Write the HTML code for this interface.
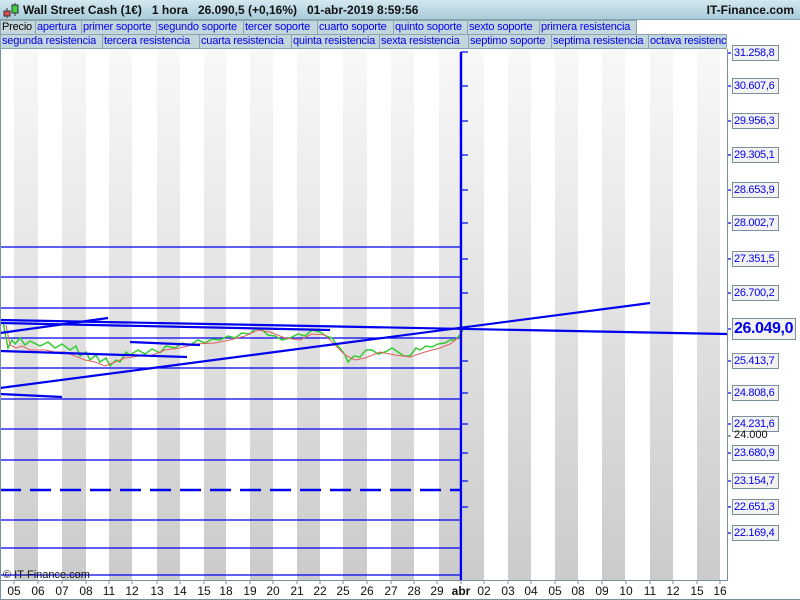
<!DOCTYPE html>
<html><head><meta charset="utf-8"><style>
*{margin:0;padding:0;box-sizing:border-box}
body{width:800px;height:600px;overflow:hidden;background:#fff;font-family:"Liberation Sans",sans-serif;position:relative}
#hdr{position:absolute;left:0;top:0;width:800px;height:20px;background:linear-gradient(#d4e8f0,#a8ccda);border-bottom:1px solid #8aa2ae;font-size:12px;font-weight:bold;color:#111;white-space:nowrap}
.t{position:absolute;height:15px;background:#c3d5dd;border:1px solid #8ca4b0;font-size:11px;letter-spacing:-0.2px;color:#0000ee;line-height:13px;padding-left:1px;white-space:nowrap;overflow:hidden}
.al{position:absolute;left:732px;width:47px;height:16px;border:1px solid #7a909c;background:#f2f2f2;color:#0000ee;font-size:11px;letter-spacing:-0.3px;line-height:14px;padding-left:1px;white-space:nowrap;overflow:hidden}
.d{position:absolute;top:584px;font-size:12px;color:#111;width:24px;text-align:center}
</style></head><body>
<div id="hdr">
<svg style="position:absolute;left:3px;top:2px" width="16" height="16"><line x1="4" y1="6" x2="4" y2="16" stroke="#333"/><rect x="1" y="9" width="6" height="5" fill="#e05050" stroke="#333"/><line x1="12" y1="1" x2="12" y2="14" stroke="#333"/><rect x="9" y="3" width="6" height="8" fill="#40d040" stroke="#333"/></svg>
<span style="position:absolute;left:23px;top:3px">Wall Street Cash (1€)&nbsp;&nbsp;&nbsp;1 hora&nbsp;&nbsp;&nbsp;26.090,5 (+0,16%)&nbsp;&nbsp;&nbsp;01-abr-2019 8:59:56</span>
<span style="position:absolute;right:6px;top:3px">IT-Finance.com</span>
</div>
<div class="t" style="left:0;top:20px;width:36px;color:#000">Precio</div>
<div class="t" style="left:35px;top:20px;width:47px">apertura</div>
<div class="t" style="left:81px;top:20px;width:76px">primer soporte</div>
<div class="t" style="left:156px;top:20px;width:88px">segundo soporte</div>
<div class="t" style="left:243px;top:20px;width:75px">tercer soporte</div>
<div class="t" style="left:317px;top:20px;width:77px">cuarto soporte</div>
<div class="t" style="left:393px;top:20px;width:75px">quinto soporte</div>
<div class="t" style="left:467px;top:20px;width:73px">sexto soporte</div>
<div class="t" style="left:539px;top:20px;width:98px">primera resistencia</div>
<div class="t" style="left:0;top:34px;width:103px">segunda resistencia</div>
<div class="t" style="left:102px;top:34px;width:98px">tercera resistencia</div>
<div class="t" style="left:199px;top:34px;width:93px">cuarta resistencia</div>
<div class="t" style="left:291px;top:34px;width:89px">quinta resistencia</div>
<div class="t" style="left:379px;top:34px;width:90px">sexta resistencia</div>
<div class="t" style="left:468px;top:34px;width:84px">septimo soporte</div>
<div class="t" style="left:551px;top:34px;width:98px">septima resistencia</div>
<div class="t" style="left:648px;top:34px;width:79px">octava resistencia</div>
<svg style="position:absolute;left:0;top:0" width="800" height="600">
<defs><linearGradient id="g" x1="0" y1="0" x2="0" y2="1"><stop offset="0" stop-color="#f8f8f8"/><stop offset="1" stop-color="#cbcbcb"/></linearGradient></defs>
<g fill="url(#g)">
<rect x="14" y="49" width="24" height="531"/><rect x="62" y="49" width="24" height="531"/><rect x="109" y="49" width="23" height="531"/><rect x="157" y="49" width="23" height="531"/><rect x="204" y="49" width="22" height="531"/><rect x="250" y="49" width="23" height="531"/><rect x="297" y="49" width="23" height="531"/><rect x="343" y="49" width="24" height="531"/><rect x="391" y="49" width="23" height="531"/><rect x="439" y="49" width="22" height="531"/><rect x="463" y="49" width="21" height="531"/><rect x="508" y="49" width="23" height="531"/><rect x="555" y="49" width="23" height="531"/><rect x="602" y="49" width="23" height="531"/><rect x="650" y="49" width="23" height="531"/><rect x="697" y="49" width="23" height="531"/>
</g>
<g stroke="#0000ee" stroke-width="1.3">
<line x1="0" y1="247" x2="460" y2="247"/><line x1="0" y1="277" x2="460" y2="277"/><line x1="0" y1="308" x2="460" y2="308"/><line x1="0" y1="338" x2="460" y2="338"/><line x1="0" y1="368" x2="460" y2="368"/><line x1="0" y1="399" x2="460" y2="399"/><line x1="0" y1="429" x2="460" y2="429"/><line x1="0" y1="460" x2="460" y2="460"/><line x1="0" y1="520" x2="460" y2="520"/><line x1="0" y1="548" x2="460" y2="548"/><line x1="0" y1="575" x2="460" y2="575"/>
</g>
<line x1="0" y1="490" x2="460" y2="490" stroke="#0000ee" stroke-width="2.5" stroke-dasharray="21,9"/>
<polyline fill="none" stroke="#3c3" stroke-width="1.5" points="3,322 8,348 12,340 15,344 20,338 25,345 30,341 40,346 48,342 55,348 62,344 70,350 76,346 80,356 86,352 90,360 96,355 100,362 106,358 110,366 116,360 120,362 126,352 130,355 138,350 145,354 152,349 160,353 166,346 175,348 182,343 190,345 198,340 205,343 212,339 220,340 228,336 235,338 242,333 250,334 256,328 262,330 268,335 275,336 282,340 290,338 298,334 305,336 312,330 320,332 326,336 332,338 336,344 340,348 345,355 348,362 354,356 360,357 366,350 372,350 378,354 385,352 392,348 398,352 404,356 410,356 416,348 420,350 426,346 432,347 438,344 445,343 450,340 455,340 460,335 464,328 468,326"/>
<polyline fill="none" stroke="#e06060" stroke-width="1" points="6,325 10,345 16,348 22,346 30,350 45,350 55,352 65,352 75,356 85,360 95,362 105,366 115,362 125,358 140,356 150,356 165,350 180,348 195,344 215,343 230,340 245,336 258,330 270,332 285,338 300,340 312,334 325,335 335,345 345,355 355,360 365,358 380,352 395,355 410,357 425,352 440,348 450,344 458,338"/>
<g stroke="#0000ee" stroke-width="2.2">
<line x1="0" y1="320" x2="727" y2="334"/><line x1="0" y1="323" x2="330" y2="330"/><line x1="0" y1="333" x2="108" y2="318"/><line x1="0" y1="351" x2="187" y2="357"/><line x1="130" y1="342" x2="200" y2="345"/><line x1="0" y1="388" x2="650" y2="303"/><line x1="0" y1="394" x2="62" y2="397"/>
</g>
<line x1="461" y1="52" x2="461" y2="580" stroke="#0000ee" stroke-width="2.5"/>
<g stroke="#0000ee" stroke-width="1.2">
<line x1="461" y1="52" x2="468" y2="52"/><line x1="461" y1="86" x2="468" y2="86"/><line x1="461" y1="121" x2="468" y2="121"/><line x1="461" y1="155" x2="468" y2="155"/><line x1="461" y1="190" x2="468" y2="190"/><line x1="461" y1="223" x2="468" y2="223"/><line x1="461" y1="259" x2="468" y2="259"/><line x1="461" y1="293" x2="468" y2="293"/><line x1="461" y1="361" x2="468" y2="361"/><line x1="461" y1="393" x2="468" y2="393"/><line x1="461" y1="424" x2="468" y2="424"/><line x1="461" y1="453" x2="468" y2="453"/><line x1="461" y1="481" x2="468" y2="481"/><line x1="461" y1="507" x2="468" y2="507"/>
<line x1="727" y1="53" x2="731" y2="53"/><line x1="727" y1="86" x2="731" y2="86"/><line x1="727" y1="121" x2="731" y2="121"/><line x1="727" y1="155" x2="731" y2="155"/><line x1="727" y1="190" x2="731" y2="190"/><line x1="727" y1="223" x2="731" y2="223"/><line x1="727" y1="259" x2="731" y2="259"/><line x1="727" y1="293" x2="731" y2="293"/><line x1="727" y1="329" x2="731" y2="329"/><line x1="727" y1="361" x2="731" y2="361"/><line x1="727" y1="393" x2="731" y2="393"/><line x1="727" y1="424" x2="731" y2="424"/><line x1="727" y1="453" x2="731" y2="453"/><line x1="727" y1="481" x2="731" y2="481"/><line x1="727" y1="507" x2="731" y2="507"/><line x1="727" y1="533" x2="731" y2="533"/>
</g>
<line x1="727" y1="436" x2="731" y2="436" stroke="#444"/>
<line x1="727.5" y1="49" x2="727.5" y2="581" stroke="#7a909c"/>
<line x1="0" y1="580.5" x2="728" y2="580.5" stroke="#7a909c"/>
<line x1="0.5" y1="49" x2="0.5" y2="600" stroke="#7a909c"/>
<line x1="0" y1="599.5" x2="800" y2="599.5" stroke="#7a909c"/>
<g stroke="#7a909c"><line x1="14" y1="580" x2="14" y2="584"/><line x1="38" y1="580" x2="38" y2="584"/><line x1="62" y1="580" x2="62" y2="584"/><line x1="86" y1="580" x2="86" y2="584"/><line x1="109" y1="580" x2="109" y2="584"/><line x1="132" y1="580" x2="132" y2="584"/><line x1="157" y1="580" x2="157" y2="584"/><line x1="180" y1="580" x2="180" y2="584"/><line x1="204" y1="580" x2="204" y2="584"/><line x1="226" y1="580" x2="226" y2="584"/><line x1="250" y1="580" x2="250" y2="584"/><line x1="273" y1="580" x2="273" y2="584"/><line x1="297" y1="580" x2="297" y2="584"/><line x1="320" y1="580" x2="320" y2="584"/><line x1="343" y1="580" x2="343" y2="584"/><line x1="367" y1="580" x2="367" y2="584"/><line x1="391" y1="580" x2="391" y2="584"/><line x1="414" y1="580" x2="414" y2="584"/><line x1="437" y1="580" x2="437" y2="584"/><line x1="461" y1="580" x2="461" y2="584"/><line x1="484" y1="580" x2="484" y2="584"/><line x1="508" y1="580" x2="508" y2="584"/><line x1="531" y1="580" x2="531" y2="584"/><line x1="555" y1="580" x2="555" y2="584"/><line x1="578" y1="580" x2="578" y2="584"/><line x1="602" y1="580" x2="602" y2="584"/><line x1="626" y1="580" x2="626" y2="584"/><line x1="650" y1="580" x2="650" y2="584"/><line x1="673" y1="580" x2="673" y2="584"/><line x1="697" y1="580" x2="697" y2="584"/><line x1="720" y1="580" x2="720" y2="584"/></g>
<text x="3" y="578" font-family="Liberation Sans" font-size="11" fill="#111">© IT-Finance.com</text>
</svg>
<div class="al" style="top:45px">31.258,8</div>
<div class="al" style="top:78px">30.607,6</div>
<div class="al" style="top:113px">29.956,3</div>
<div class="al" style="top:147px">29.305,1</div>
<div class="al" style="top:182px">28.653,9</div>
<div class="al" style="top:215px">28.002,7</div>
<div class="al" style="top:251px">27.351,5</div>
<div class="al" style="top:285px">26.700,2</div>
<div class="al" style="top:318px;width:64px;height:22px;font-size:16px;font-weight:bold;line-height:20px;letter-spacing:-0.4px">26.049,0</div>
<div class="al" style="top:353px">25.413,7</div>
<div class="al" style="top:385px">24.808,6</div>
<div class="al" style="top:416px">24.231,6</div>
<div style="position:absolute;left:734px;top:429px;font-size:11px;color:#111">24.000</div>
<div class="al" style="top:445px">23.680,9</div>
<div class="al" style="top:473px">23.154,7</div>
<div class="al" style="top:499px">22.651,3</div>
<div class="al" style="top:525px">22.169,4</div>
<div class="d" style="left:2px">05</div><div class="d" style="left:26px">06</div><div class="d" style="left:50px">07</div><div class="d" style="left:74px">08</div><div class="d" style="left:97px">11</div><div class="d" style="left:120px">12</div><div class="d" style="left:145px">13</div><div class="d" style="left:168px">14</div><div class="d" style="left:192px">15</div><div class="d" style="left:214px">18</div><div class="d" style="left:238px">19</div><div class="d" style="left:261px">20</div><div class="d" style="left:285px">21</div><div class="d" style="left:308px">22</div><div class="d" style="left:331px">25</div><div class="d" style="left:355px">26</div><div class="d" style="left:379px">27</div><div class="d" style="left:402px">28</div><div class="d" style="left:425px">29</div><div class="d" style="left:449px;font-weight:bold">abr</div><div class="d" style="left:472px">02</div><div class="d" style="left:496px">03</div><div class="d" style="left:519px">04</div><div class="d" style="left:543px">05</div><div class="d" style="left:566px">08</div><div class="d" style="left:590px">09</div><div class="d" style="left:614px">10</div><div class="d" style="left:638px">11</div><div class="d" style="left:661px">12</div><div class="d" style="left:685px">15</div><div class="d" style="left:708px">16</div>
</body></html>
